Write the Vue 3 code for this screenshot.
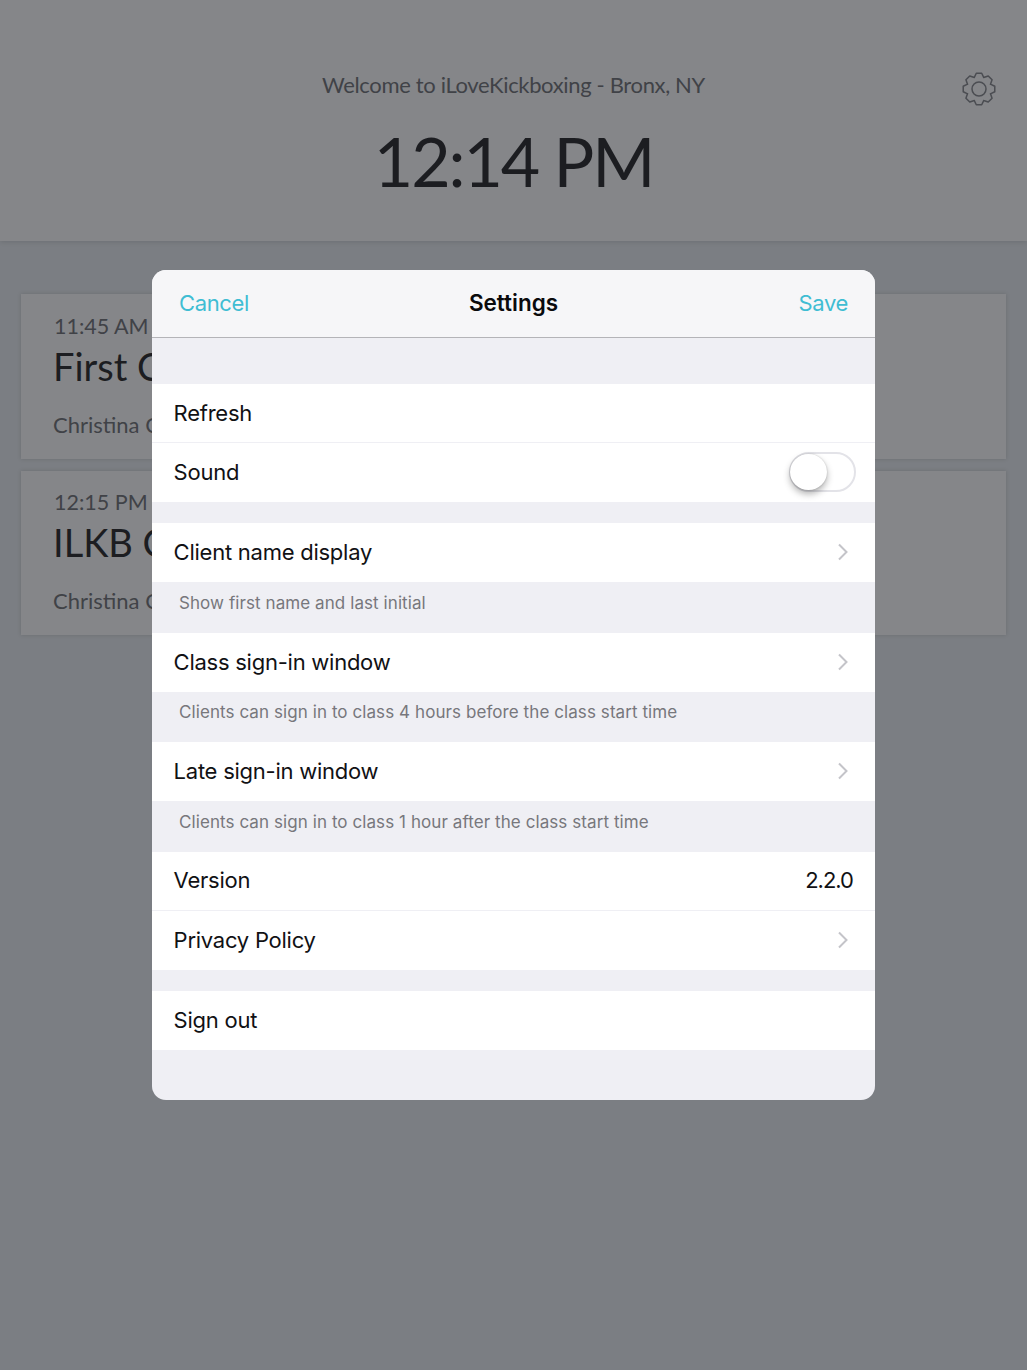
<template>
  <div class="page">
    <header class="top">
      <p class="welcome">Welcome to iLoveKickboxing - Bronx, NY</p>
      <h1 class="clock">12:14 PM</h1>
      <svg class="gear" viewBox="0 0 36 36" width="36" height="36" aria-hidden="true">
        <path :d="gearPath" fill="none" stroke="#4b4d52" stroke-width="1.5" stroke-linejoin="round" />
        <circle cx="18" cy="18" r="7" fill="none" stroke="#4b4d52" stroke-width="1.5" />
      </svg>
    </header>

    <section class="classes">
      <article v-for="c in classes" :key="c.time" class="class-card">
        <div class="class-time">{{ c.time }}</div>
        <div class="class-name">{{ c.name }}</div>
        <div class="class-coach">{{ c.coach }}</div>
      </article>
    </section>

    <div class="modal">
      <div class="modal-head">
        <span class="link">Cancel</span>
        <span class="modal-title">Settings</span>
        <span class="link save">Save</span>
      </div>

      <div class="gap-lg"></div>

      <div class="row line"><span>Refresh</span></div>
      <div class="row">
        <span>Sound</span>
        <span class="toggle"><span class="knob"></span></span>
      </div>

      <div class="gap"></div>

      <template v-for="item in windows" :key="item.label">
        <div class="row">
          <span>{{ item.label }}</span>
          <svg class="chev" viewBox="0 0 12 18" width="12" height="18" aria-hidden="true">
            <path d="M2 1.5 9.5 9 2 16.5" fill="none" stroke="#c4c4c9" stroke-width="2" />
          </svg>
        </div>
        <div class="hint">{{ item.hint }}</div>
      </template>

      <div class="row line">
        <span>Version</span>
        <span class="version">2.2.0</span>
      </div>
      <div class="row">
        <span>Privacy Policy</span>
        <svg class="chev" viewBox="0 0 12 18" width="12" height="18" aria-hidden="true">
          <path d="M2 1.5 9.5 9 2 16.5" fill="none" stroke="#c4c4c9" stroke-width="2" />
        </svg>
      </div>

      <div class="gap"></div>

      <div class="row"><span>Sign out</span></div>
    </div>
  </div>
</template>

<script setup>
const classes = [
  { time: '11:45 AM', name: 'First Class', coach: 'Christina C' },
  { time: '12:15 PM', name: 'ILKB Class', coach: 'Christina C' },
]

const windows = [
  { label: 'Client name display', hint: 'Show first name and last initial' },
  { label: 'Class sign-in window', hint: 'Clients can sign in to class 4 hours before the class start time' },
  { label: 'Late sign-in window', hint: 'Clients can sign in to class 1 hour after the class start time' },
]

// 8 tooth gear outline
function buildGear() {
  const pts = []
  for (let i = 0; i < 8; i++) {
    const a = (i * Math.PI) / 4 - Math.PI / 2
    const step = [
      [-0.4, 12.4],
      [-0.17, 16],
      [0.17, 16],
      [0.4, 12.4],
    ]
    for (const [da, r] of step) {
      pts.push(`${(18 + r * Math.cos(a + da)).toFixed(2)} ${(18 + r * Math.sin(a + da)).toFixed(2)}`)
    }
  }
  return `M${pts.join('L')}Z`
}
const gearPath = buildGear()
</script>

<style scoped>
.page {
  position: relative;
  height: 1370px;
  overflow: hidden;
  background: #7b7e83;
  font-family: Lato, "Open Sans", sans-serif;
}

.top {
  position: relative;
  height: 241px;
  box-sizing: border-box;
  padding-top: 70px;
  background: #858689;
  box-shadow: 0 1px 5px rgba(0, 0, 0, 0.12);
  text-align: center;
}
.welcome {
  margin: 0;
  font-size: 22px;
  line-height: 30px;
  letter-spacing: -0.35px;
  color: #404247;
}
.clock {
  margin: 19px 0 0;
  font-size: 68px;
  line-height: 84px;
  font-weight: 400;
  letter-spacing: -2.1px;
  color: #1c1d21;
}
.gear {
  position: absolute;
  top: 71px;
  left: 961px;
}

.classes {
  display: flex;
  flex-direction: column;
  gap: 12px;
  padding: 53px 21px 0;
}
.class-card {
  height: 164.5px;
  box-sizing: border-box;
  padding: 16.6px 32px;
  background: #858689;
  box-shadow: 0 0 4px rgba(0, 0, 0, 0.14);
}
.class-time {
  font-size: 21.5px;
  line-height: 30px;
  color: #404247;
  margin-left: 1px;
}
.class-name {
  font-size: 38px;
  line-height: 50px;
  color: #1c1d21;
}
.class-coach {
  margin-top: 19px;
  font-size: 22px;
  line-height: 30px;
  color: #404247;
}

.modal {
  position: absolute;
  top: 270px;
  left: 152px;
  width: 723px;
  height: 830px;
  overflow: hidden;
  border-radius: 14px;
  background: #efeff4;
  font-family: Inter, "Liberation Sans", sans-serif;
  font-size: 22px;
  letter-spacing: -0.25px;
  color: #111114;
}
.modal-head {
  display: grid;
  grid-template-columns: 1fr auto 1fr;
  align-items: center;
  height: 68px;
  padding: 0 27px 2px;
  box-sizing: border-box;
  background: #f6f6f8;
  border-bottom: 1px solid #b4b4b8;
}
.modal-title {
  font-weight: 600;
  font-size: 22.5px;
  letter-spacing: 0;
  color: #0a0a0c;
}
.link {
  color: #3fbdd3;
  font-size: 22px;
  letter-spacing: -0.35px;
}
.save { text-align: right; }
.gap-lg { height: 46px; }
.gap { height: 21px; }

.row {
  display: flex;
  align-items: center;
  justify-content: space-between;
  height: 59px;
  box-sizing: border-box;
  padding: 0 22px 0.6px 21.6px;
  background: #fff;
}
.line { border-bottom: 1px solid #efeff4; }

.version { letter-spacing: -1px; }

.hint {
  height: 50.5px;
  box-sizing: border-box;
  padding: 8.5px 27px 0;
  font-size: 17px;
  line-height: 24px;
  letter-spacing: 0.08px;
  color: #77777c;
}

.chev {
  margin-right: 4px;
}

.toggle {
  position: relative;
  width: 67px;
  height: 40px;
  box-sizing: border-box;
  margin-right: -3px;
  border: 2px solid #e3e3e8;
  border-radius: 20px;
}
/* knob sits on top of the track */
.knob {
  position: absolute;
  top: 0;
  left: -1px;
  width: 37px;
  height: 36px;
  border-radius: 50%;
  background: #fff;
  box-shadow: 0 4px 7px rgba(0, 0, 0, 0.3), 0 0 2px rgba(0, 0, 0, 0.2);
}
</style>
